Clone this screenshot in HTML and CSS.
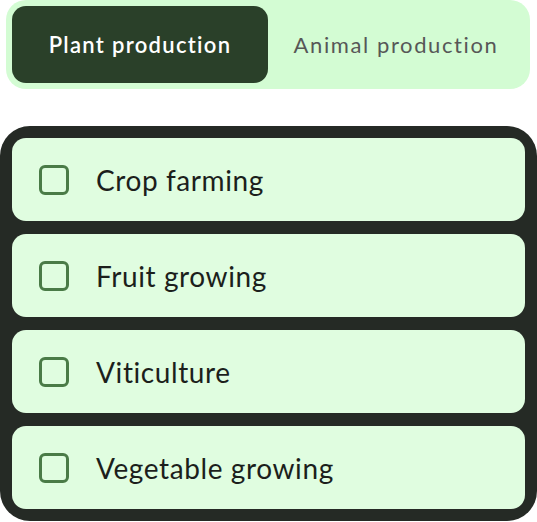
FILE: index.html
```html
<!DOCTYPE html>
<html lang="en">
<head>
<meta charset="utf-8">
<title>Production</title>
<link rel="stylesheet" href="styles.css">
</head>
<body>
<div class="page">
  <div class="tabs">
    <button class="tab tab-active">Plant production</button>
    <button class="tab">Animal production</button>
  </div>
  <div class="list">
    <label class="item"><span class="box"></span><span class="label">Crop farming</span></label>
    <label class="item"><span class="box"></span><span class="label">Fruit growing</span></label>
    <label class="item"><span class="box"></span><span class="label">Viticulture</span></label>
    <label class="item"><span class="box"></span><span class="label">Vegetable growing</span></label>
  </div>
</div>
</body>
</html>
```
FILE: styles.css
```css
html, body {
  margin: 0;
  padding: 0;
  background: #ffffff;
}
body {
  font-family: Lato, "Open Sans", sans-serif;
}
.page {
  width: 537px;
  display: flex;
  flex-direction: column;
  gap: 37px;
}
.tabs {
  margin: 0 7px 0 6px;
  height: 89px;
  box-sizing: border-box;
  padding: 6px;
  background: #d3fcd3;
  border-radius: 20px;
  display: grid;
  grid-template-columns: 1fr 1fr;
}
.tab {
  border: 0;
  background: transparent;
  border-radius: 14px;
  font-family: inherit;
  font-size: 22px;
  font-weight: 400;
  letter-spacing: 1.6px;
  color: #575757;
  padding: 0;
  cursor: pointer;
}
.tab-active {
  background: #2a4029;
  color: #ffffff;
  font-weight: 600;
  letter-spacing: 1.3px;
}
.list {
  background: #252a25;
  border-radius: 30px;
  padding: 12px;
  height: 395px;
  box-sizing: border-box;
  display: flex;
  flex-direction: column;
  gap: 13px;
}
.item {
  height: 83px;
  background: #e0fde0;
  border-radius: 14px;
  display: flex;
  align-items: center;
  padding-left: 27px;
  gap: 27px;
}
.box {
  width: 30px;
  height: 30px;
  box-sizing: border-box;
  border: 3px solid #4a7b47;
  border-radius: 6px;
  flex: none;
}
.label {
  font-size: 28px;
  letter-spacing: 0.6px;
  color: #1c1f1c;
}
```
